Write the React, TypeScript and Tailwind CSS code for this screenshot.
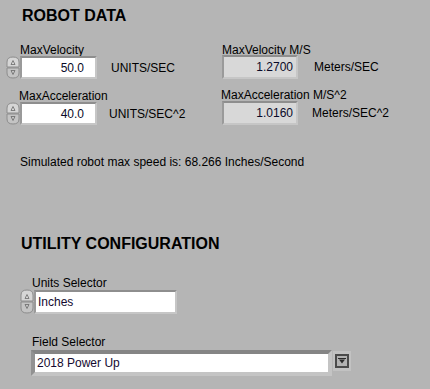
import React from 'react';

const font = { fontFamily: '"Liberation Sans", Arial, sans-serif' };

function Spinner({ h = 23 }: { h?: number }) {
  const half = h / 2;
  return (
    <svg width="14" height={h} viewBox={`0 0 14 ${h}`} className="block shrink-0">
      <path d={`M1 ${half - 0.5} V6 Q1 1 7 1 Q13 1 13 6 V${half - 0.5} Z`} fill="#d6d6d6" stroke="#8c8c8c" />
      <path d={`M1 ${half + 0.5} V${h - 6} Q1 ${h - 1} 7 ${h - 1} Q13 ${h - 1} 13 ${h - 6} V${half + 0.5} Z`} fill="#c4c4c4" stroke="#8c8c8c" />
      <path d={`M5 ${half - 3} L7 ${half - 7} L9 ${half - 3} Z`} fill="none" stroke="#6a6a6a" strokeWidth="0.8" />
      <path d={`M5 ${half + 3} L7 ${half + 7} L9 ${half + 3} Z`} fill="none" stroke="#6a6a6a" strokeWidth="0.8" />
    </svg>
  );
}

function NumControl({ value }: { value: string }) {
  return (
    <div className="flex items-center">
      <Spinner />
      <div className="w-[77px] h-[23px] border-2 border-t-[#8e8e8e] border-l-[#9a9a9a] border-b-[#c6c6c6] border-r-[#c6c6c6] bg-white flex items-center justify-end pr-[11px] text-[12px] text-[#0a0a28]">
        {value}
      </div>
    </div>
  );
}

function NumIndicator({ value }: { value: string }) {
  return (
    <div className="w-[76px] h-[24px] border-2 border-t-[#8e8e8e] border-l-[#9a9a9a] border-b-[#c6c6c6] border-r-[#c6c6c6] bg-[#d8d8d8] flex items-center justify-end pr-[3px] text-[12px] text-[#0a0a28]">
      {value}
    </div>
  );
}

function DropButton() {
  return (
    <div className="w-[18px] h-[20px] bg-[#c2c2c2] flex items-center justify-center">
      <div className="w-[14px] h-[14px] border-2 border-[#4a4a4a] bg-[#b2b2b2] flex items-center justify-center">
        <svg width="8" height="6" viewBox="0 0 8 6" className="block">
          <rect x="0" y="0" width="8" height="1" fill="#2a2a2a" />
          <path d="M1 1.5 H7 L4 5.5 Z" fill="#2a2a2a" />
        </svg>
      </div>
    </div>
  );
}

export default function App() {
  return (
    <div className="w-[430px] h-[389px] bg-[#b5b5b5] text-black overflow-hidden" style={font}>
      <div className="pl-[22px] pt-[6px] h-[20px] text-[16px] leading-[20px] font-bold">ROBOT DATA</div>

      <div className="flex mt-[23px]">
        {/* left column */}
        <div className="w-[215px] pl-[6px]">
          <div className="pl-[14px] text-[12px] leading-[14px]">MaxVelocity</div>
          <div className="flex items-center mt-[-1px]">
            <NumControl value="50.0" />
            <span className="ml-[14px] text-[12px]">UNITS/SEC</span>
          </div>
          <div className="pl-[13px] mt-[10px] text-[12px] leading-[14px]">MaxAcceleration</div>
          <div className="flex items-center mt-[-1px]">
            <NumControl value="40.0" />
            <span className="ml-[12px] text-[12px]">UNITS/SEC^2</span>
          </div>
        </div>

        {/* right column */}
        <div className="pl-[7px]">
          <div className="text-[12px] leading-[14px]">MaxVelocity M/S</div>
          <div className="flex items-center mt-[-2px]">
            <NumIndicator value="1.2700" />
            <span className="ml-[16px] text-[12px]">Meters/SEC</span>
          </div>
          <div className="mt-[9px] ml-[-1px] text-[12px] leading-[14px]">MaxAcceleration M/S^2</div>
          <div className="flex items-center mt-[-1px]">
            <NumIndicator value="1.0160" />
            <span className="ml-[14px] text-[12px]">Meters/SEC^2</span>
          </div>
        </div>
      </div>

      <div className="pl-[20px] mt-[30px] text-[12px] leading-[14px]">
        Simulated robot max speed is: 68.266 Inches/Second
      </div>

      <div className="pl-[21px] mt-[65px] text-[16px] leading-[20px] font-bold">UTILITY CONFIGURATION</div>

      <div className="pl-[32px] mt-[22px] text-[12px] leading-[14px]">Units Selector</div>
      <div className="flex items-center pl-[20px] mt-[-1px]">
        <Spinner h={25} />
        <div className="w-[143px] h-[24px] border-2 border-t-[#8e8e8e] border-l-[#9a9a9a] border-b-[#c6c6c6] border-r-[#c6c6c6] bg-white flex items-center pl-[2px] text-[12px] text-[#140a30]">
          Inches
        </div>
      </div>

      <div className="pl-[32px] mt-[21px] text-[12px] leading-[14px]">Field Selector</div>
      <div className="flex items-start pl-[31px] mt-[1px]">
        <div className="w-[301px] h-[26px] border-[4px] border-t-[#858585] border-l-[#929292] border-b-[#c4c4c4] border-r-[#c4c4c4] bg-white flex items-center pl-[2px] text-[12px] text-[#140a30]">
          2018 Power Up
        </div>
        <div className="mt-[1px] ml-[1px]">
          <DropButton />
        </div>
      </div>
    </div>
  );
}
